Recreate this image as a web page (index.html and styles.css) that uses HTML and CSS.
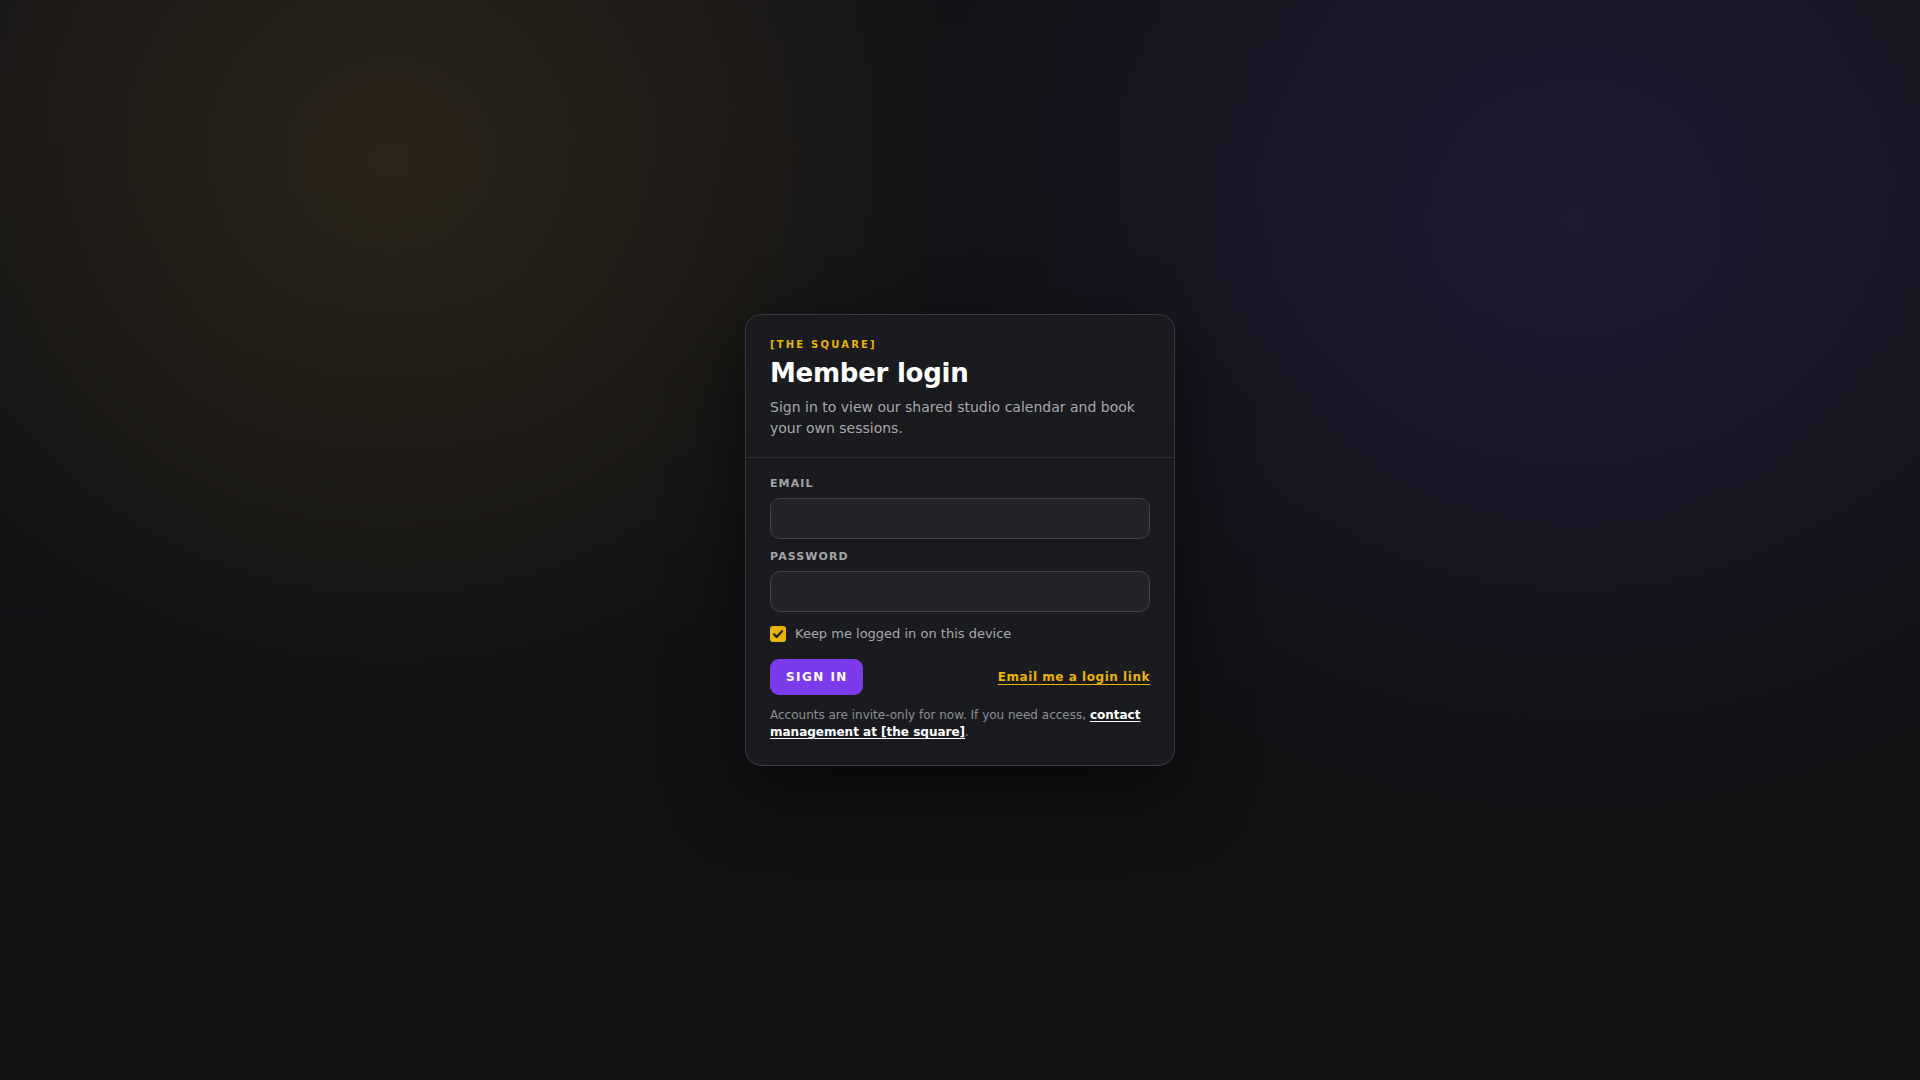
FILE: index.html
```html
<!DOCTYPE html>
<html lang="en">
<head>
<meta charset="utf-8">
<title>Member login · [the square]</title>
<link rel="stylesheet" href="styles.css">
</head>
<body>
<main class="page">
  <section class="card">
    <header class="card-head">
      <div class="eyebrow">[THE SQUARE]</div>
      <h1 class="title">Member login</h1>
      <p class="lead">Sign in to view our shared studio calendar and book your own sessions.</p>
    </header>
    <form class="card-body">
      <label class="field-label" for="email">EMAIL</label>
      <input class="field-input" id="email" type="email">
      <label class="field-label field-label-2" for="password">PASSWORD</label>
      <input class="field-input" id="password" type="password">
      <label class="remember">
        <span class="check">
          <svg viewBox="0 0 16 16" width="16" height="16"><path d="M4 8.3l2.6 2.6L12 5.2" fill="none" stroke="#1a1b1f" stroke-width="2.2" stroke-linecap="round" stroke-linejoin="round"/></svg>
        </span>
        <span>Keep me logged in on this device</span>
      </label>
      <div class="actions">
        <button type="button" class="btn">SIGN IN</button>
        <a class="magic" href="#">Email me a login link</a>
      </div>
      <p class="note">Accounts are invite-only for now. If you need access, <a href="#">contact management at [the square]</a>.</p>
    </form>
  </section>
</main>
</body>
</html>
```

FILE: styles.css
```css
* { box-sizing: border-box; }
html, body { height: 100%; }
body {
  margin: 0;
  font-family: "DejaVu Sans", "Liberation Sans", sans-serif;
  color: #e8e8ea;
  background-color: #111214;
  background-image:
    radial-gradient(ellipse 600px 560px at 390px 160px, rgba(225, 168, 37, 0.12), rgba(225, 168, 37, 0) 100%),
    radial-gradient(ellipse 680px 600px at 1575px 220px, rgba(103, 68, 220, 0.14), rgba(103, 68, 220, 0) 100%),
    linear-gradient(180deg, #131317 0%, #111214 70%);
}
.page {
  min-height: 100%;
  display: flex;
  align-items: center;
  justify-content: center;
}
.card {
  width: 430px;
  background: #1a1b1f;
  border: 1px solid #3a3b40;
  border-radius: 16px;
  box-shadow: 0 24px 70px rgba(0, 0, 0, 0.55);
}
.card-head {
  padding: 24px 24px 18px;
  border-bottom: 1px solid #2e2f34;
}
.eyebrow {
  font-size: 10px;
  line-height: 12px;
  font-weight: 700;
  letter-spacing: 0.22em;
  color: #eab308;
}
.title {
  margin: 6px 0 0;
  font-size: 26px;
  line-height: 32px;
  font-weight: 700;
  letter-spacing: -0.01em;
  color: #ffffff;
}
.lead {
  margin: 8px 0 0;
  font-size: 14px;
  line-height: 21px;
  color: #a6a7ad;
}
.card-body {
  padding: 20px 24px 24px;
  display: flex;
  flex-direction: column;
}
.field-label {
  font-size: 11px;
  line-height: 12px;
  font-weight: 700;
  letter-spacing: 0.1em;
  color: #a3a4aa;
}
.field-label-2 { margin-top: 12px; }
.field-input {
  margin-top: 8px;
  height: 41px;
  width: 100%;
  background: #212327;
  border: 1px solid #404247;
  border-radius: 10px;
  padding: 0 12px;
  color: #fff;
  font: inherit;
}
.remember {
  margin-top: 14px;
  display: flex;
  align-items: center;
  gap: 9px;
  font-size: 13px;
  line-height: 16px;
  color: #a6a7ad;
}
.check {
  width: 16px;
  height: 16px;
  border-radius: 3px;
  background: #eab308;
  display: flex;
}
.actions {
  margin-top: 17px;
  display: flex;
  align-items: center;
  justify-content: space-between;
}
.btn {
  height: 36px;
  padding: 0 15px 0 16px;
  border: none;
  border-radius: 9px;
  background: #7c3aed;
  color: #fff;
  font-family: inherit;
  font-size: 12px;
  font-weight: 700;
  letter-spacing: 0.12em;
}
.magic {
  font-size: 12px;
  font-weight: 700;
  letter-spacing: 0.045em;
  color: #eab308;
  text-decoration: underline;
  text-underline-offset: 3px;
}
.note {
  margin: 12px 0 0;
  font-size: 12px;
  line-height: 17px;
  color: #8d8e94;
}
.note a {
  color: #ffffff;
  font-weight: 700;
  text-decoration: underline;
  text-underline-offset: 2px;
}
```
